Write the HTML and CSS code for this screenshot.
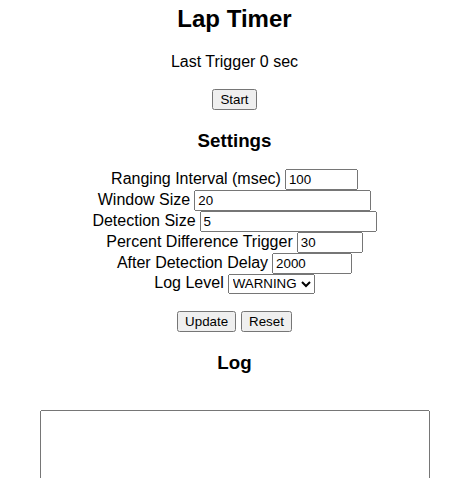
FILE: index.html
```html
<!DOCTYPE html>
<html>
<head>
<meta charset="utf-8">
<title>Lap Timer</title>
<link rel="stylesheet" href="styles.css">
</head>
<body>
<h2 class="title">Lap Timer</h2>
<p class="status">Last Trigger <span>0</span> sec</p>
<div class="actions start-row"><button class="btn" type="button">Start</button></div>
<h3 class="section">Settings</h3>
<form class="settings">
  <div class="row"><label for="ri">Ranging Interval (msec)</label><input id="ri" class="field w-ranging" type="text" value="100"></div>
  <div class="row"><label for="ws">Window Size</label><input id="ws" class="field w-wide" type="text" value="20"></div>
  <div class="row"><label for="ds">Detection Size</label><input id="ds" class="field w-wide" type="text" value="5"></div>
  <div class="row"><label for="pd">Percent Difference Trigger</label><input id="pd" class="field w-percent" type="text" value="30"></div>
  <div class="row"><label for="ad">After Detection Delay</label><input id="ad" class="field w-delay" type="text" value="2000"></div>
  <div class="row"><label for="ll">Log Level</label><select id="ll" class="select"><option>DEBUG</option><option>INFO</option><option selected>WARNING</option><option>ERROR</option></select></div>
</form>
<div class="actions update-row"><button class="btn" type="button">Update</button><button class="btn" type="button">Reset</button></div>
<h3 class="section log-title">Log</h3>
<div class="log-wrap"><textarea class="log" readonly></textarea></div>
</body>
</html>
```

FILE: styles.css
```css
html, body {
  background: #ffffff;
}
body {
  margin: 0 8px;
  font-family: "Liberation Sans", Arial, sans-serif;
  font-size: 16px;
  color: #000;
  text-align: center;
}
.title {
  font-size: 24px;
  font-weight: bold;
  margin: 5px 0 20px;
}
.status {
  margin: 0;
}
.actions {
  display: flex;
  justify-content: center;
  gap: 5px;
}
.start-row {
  margin-top: 18px;
}
.btn {
  font-family: "Liberation Sans", Arial, sans-serif;
  font-size: 13.333px;
  height: 21px;
  padding: 1px 6px;
  box-sizing: border-box;
  margin: 0;
  color: #000;
}
.section {
  font-size: 18.72px;
  font-weight: bold;
  margin: 20px 0 0;
}
.settings {
  margin: 16.5px 0 0;
}
.row {
  display: flex;
  justify-content: center;
  align-items: baseline;
  gap: 4px;
  height: 21px;
}
.field {
  font-family: "Liberation Sans", Arial, sans-serif;
  font-size: 13.333px;
  height: 21px;
  box-sizing: border-box;
  padding: 1px 2px;
  margin: 0;
  color: #000;
}
.w-ranging { width: 73px; }
.w-wide { width: 177px; }
.w-percent { width: 66px; }
.w-delay { width: 80px; }
.select {
  font-family: "Liberation Sans", Arial, sans-serif;
  font-size: 13.333px;
  height: 20px;
  width: 87px;
  margin: 0;
  color: #000;
}
.update-row {
  margin-top: 16px;
}
.log-title {
  margin-top: 20px;
}
.log-wrap {
  margin-top: 36.5px;
  display: flex;
  justify-content: center;
}
.log {
  width: 390px;
  height: 120px;
  box-sizing: border-box;
  margin: 0;
  resize: none;
}
```
